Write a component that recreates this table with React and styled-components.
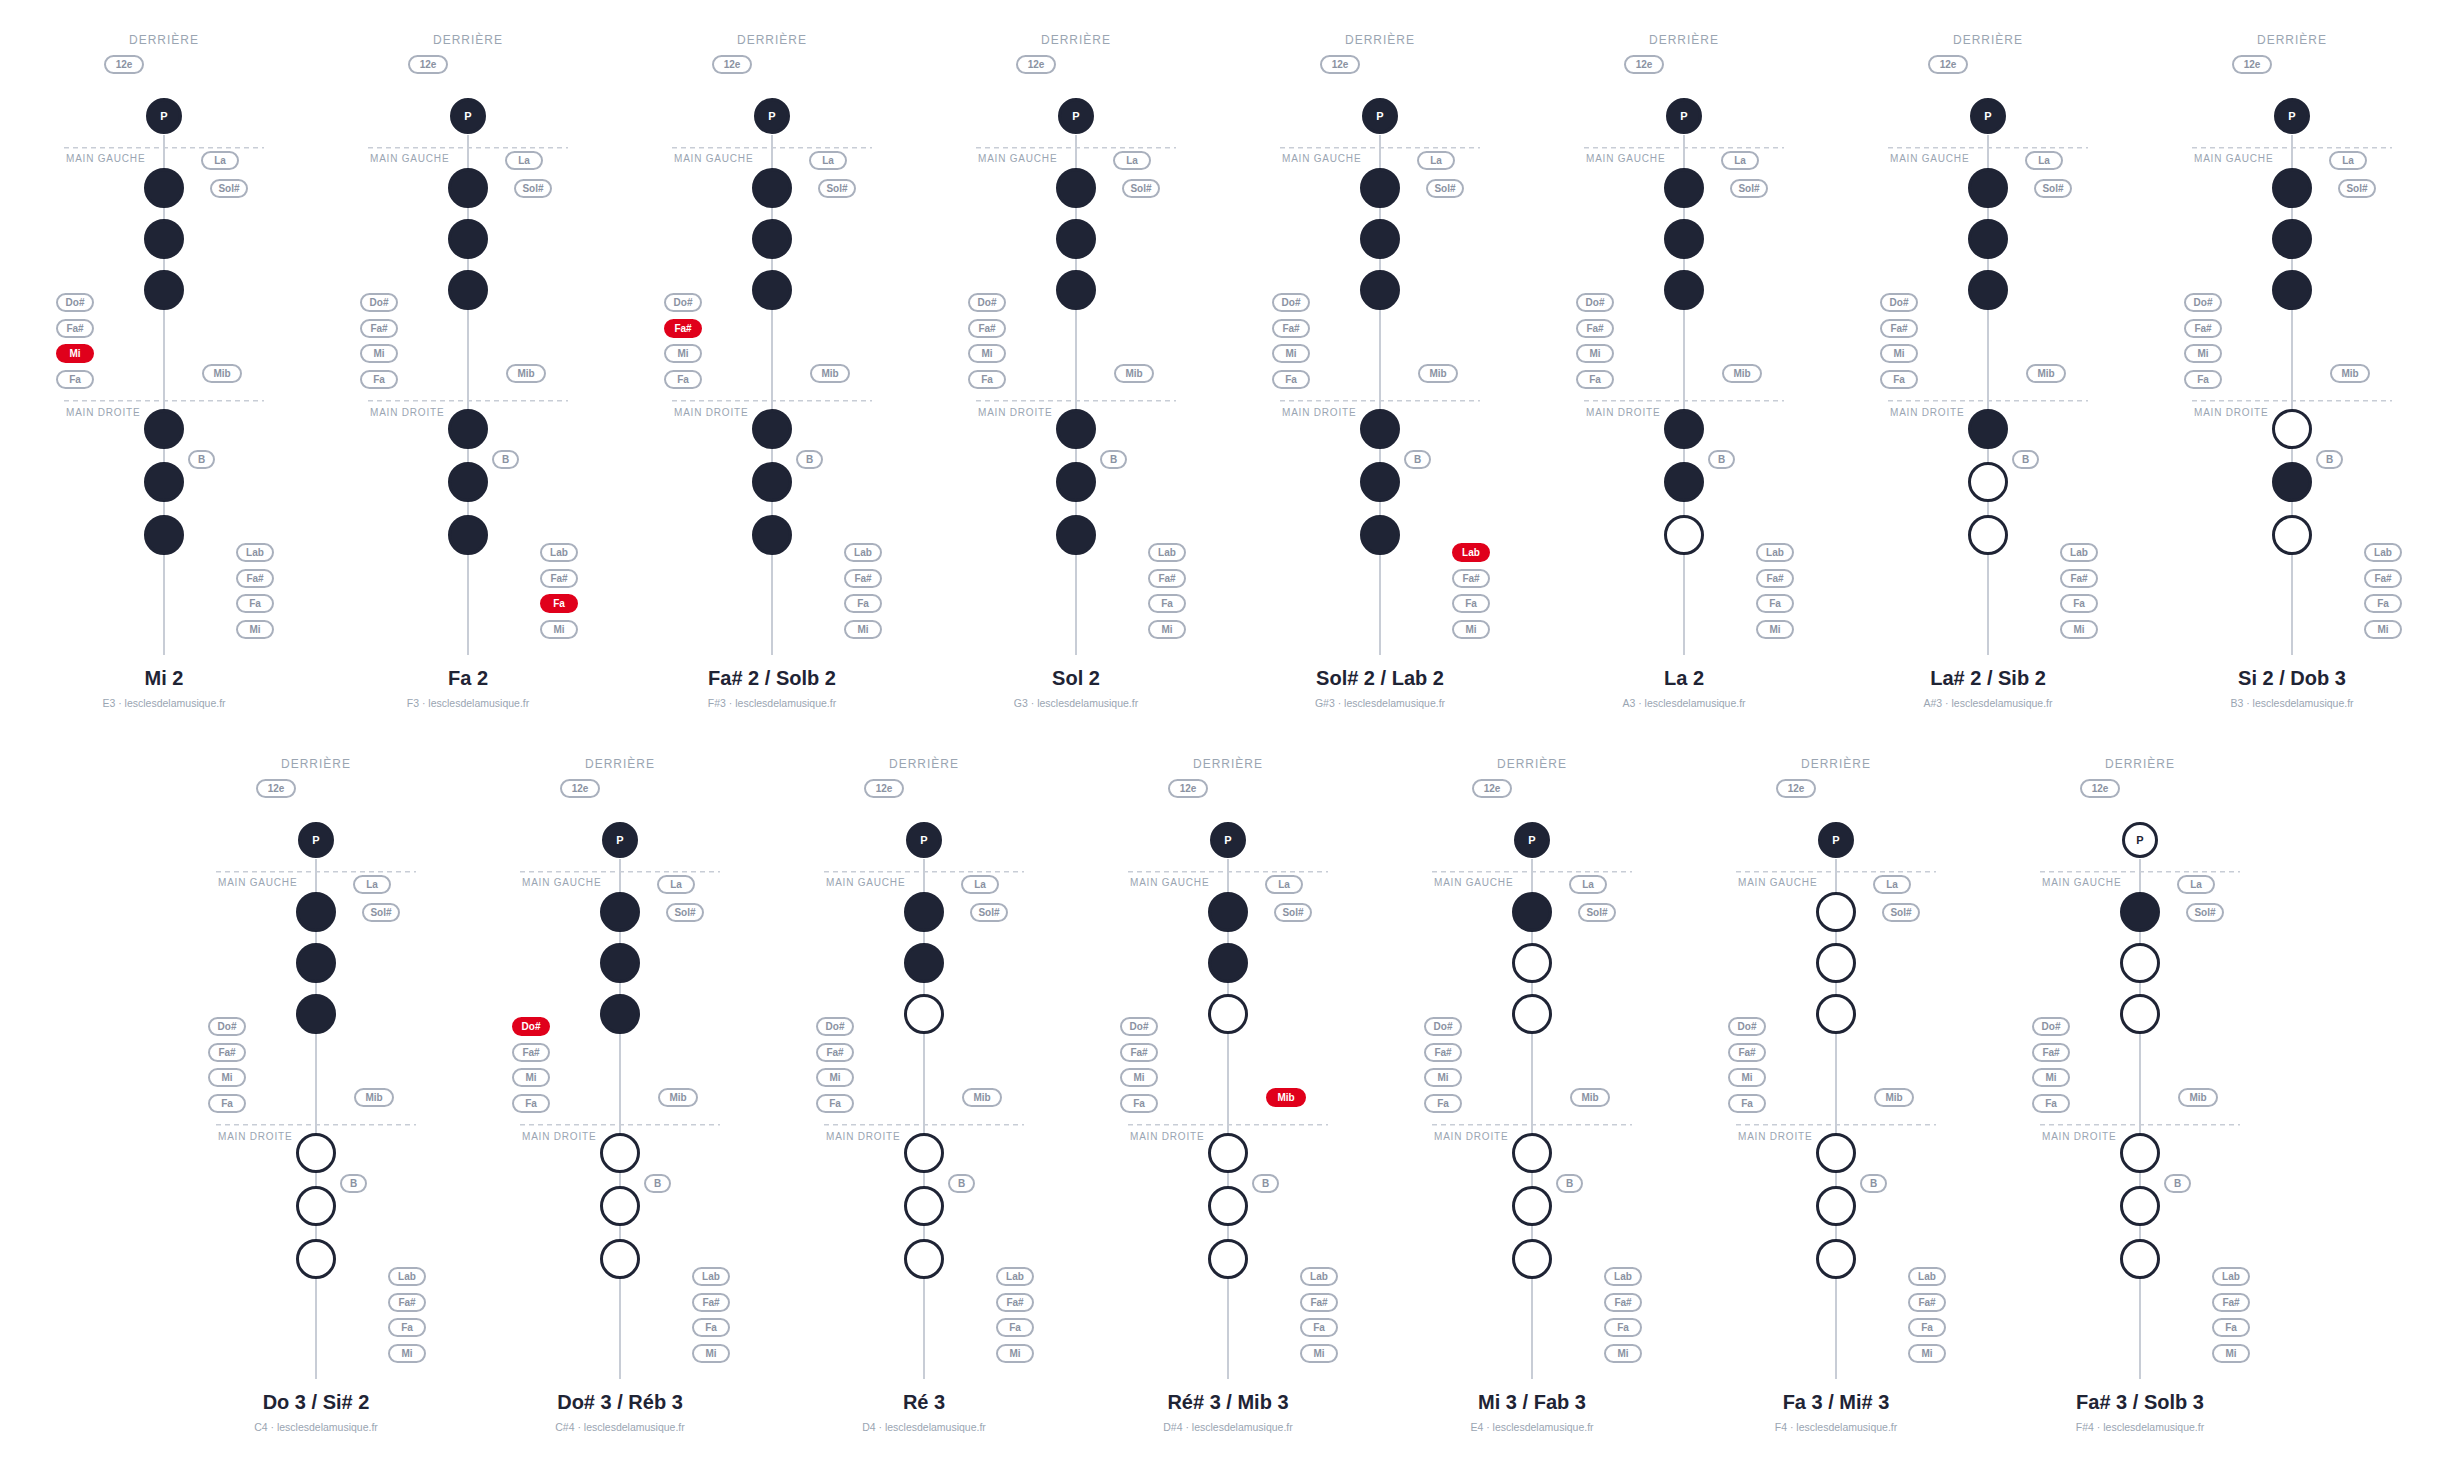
import React from "react";
import styled, { createGlobalStyle } from "styled-components";

const INK = "#1f2435";
const MUTED = "#9aa5b2";
const KEY_BORDER = "#a9b0bd";
const KEY_TEXT = "#8a92a2";
const SPINE = "#c8cdd6";
const RED = "#e0001b";

const GlobalStyle = createGlobalStyle`
  html, body {
    margin: 0;
    padding: 0;
    background: #ffffff;
  }
  body {
    font-family: "Liberation Sans", Arial, Helvetica, sans-serif;
    color: ${INK};
  }
`;

const Page = styled.div`
  display: flex;
  flex-wrap: wrap;
  justify-content: center;
  row-gap: 24px;
  padding: 26px 12px 0;
  width: 2456px;
  box-sizing: border-box;
`;

const Chart = styled.div`
  position: relative;
  width: 304px;
  height: 700px;
  display: flex;
  flex-direction: column;
  align-items: center;
`;

const Spine = styled.div`
  position: absolute;
  top: 109px;
  left: 151px;
  width: 2px;
  height: 520px;
  background: ${SPINE};
`;

const SideLabel = styled.div`
  font-size: ${(p) => (p.$small ? "10px" : "12px")};
  letter-spacing: ${(p) => (p.$small ? "0.8px" : "1px")};
  line-height: 14px;
  color: ${MUTED};
  text-transform: uppercase;
  white-space: nowrap;
`;

const BackLabel = styled(SideLabel)`
  margin-top: 7px;
  height: 14px;
`;

const ThumbKeyRow = styled.div`
  width: 120px;
  margin-top: 8px;
  display: flex;
`;

const Key = styled.div`
  box-sizing: border-box;
  width: ${(p) => p.$w || 38}px;
  height: 19px;
  border-radius: 10px;
  border: 2px solid ${(p) => (p.$active ? RED : KEY_BORDER)};
  background: ${(p) => (p.$active ? RED : "#fff")};
  color: ${(p) => (p.$active ? "#fff" : KEY_TEXT)};
  font-size: 10px;
  font-weight: 700;
  display: flex;
  align-items: center;
  justify-content: center;
  position: relative;
  z-index: 2;
`;

const Hole = styled.div`
  box-sizing: border-box;
  width: ${(p) => p.$size}px;
  height: ${(p) => p.$size}px;
  border-radius: 50%;
  border: 3px solid ${INK};
  background: ${(p) => (p.$closed ? INK : "#fff")};
  color: ${(p) => (p.$closed ? "#fff" : INK)};
  font-size: 11px;
  font-weight: 700;
  display: flex;
  align-items: center;
  justify-content: center;
  position: relative;
  z-index: 1;
  flex-shrink: 0;
`;

const ThumbHole = styled(Hole)`
  margin-top: 24px;
`;

const HandSection = styled.div`
  position: relative;
  width: 200px;
  height: ${(p) => p.$height}px;
  margin-top: ${(p) => p.$offset || 0}px;
  box-sizing: border-box;
  padding-top: ${(p) => p.$padTop}px;
  display: flex;
  flex-direction: column;
  align-items: center;
  gap: ${(p) => p.$gap}px;
  background-image: repeating-linear-gradient(
    to right,
    ${SPINE} 0 5px,
    transparent 5px 9px
  );
  background-size: 100% 1.5px;
  background-repeat: no-repeat;
  background-position: top left;
`;

const HandLabel = styled(SideLabel)`
  position: absolute;
  top: ${(p) => p.$top}px;
  left: 2px;
`;

const KeySlot = styled.div`
  position: absolute;
  top: ${(p) => p.$top}px;
  left: ${(p) => p.$left}px;
  display: flex;
  flex-direction: column;
  gap: ${(p) => p.$gap || 0}px;
`;

const Title = styled.div`
  margin-top: 12px;
  font-size: 20px;
  line-height: 24px;
  font-weight: 700;
  color: ${INK};
  white-space: nowrap;
`;

const Caption = styled.div`
  margin-top: 6px;
  font-size: 10.5px;
  line-height: 14px;
  color: ${MUTED};
  white-space: nowrap;
`;

const NOTES = [
  { name: "Mi 2", code: "E3", thumb: 1, holes: [1, 1, 1, 1, 1, 1], red: "mi" },
  { name: "Fa 2", code: "F3", thumb: 1, holes: [1, 1, 1, 1, 1, 1], red: "fa2" },
  { name: "Fa# 2 / Solb 2", code: "F#3", thumb: 1, holes: [1, 1, 1, 1, 1, 1], red: "faS" },
  { name: "Sol 2", code: "G3", thumb: 1, holes: [1, 1, 1, 1, 1, 1] },
  { name: "Sol# 2 / Lab 2", code: "G#3", thumb: 1, holes: [1, 1, 1, 1, 1, 1], red: "lab" },
  { name: "La 2", code: "A3", thumb: 1, holes: [1, 1, 1, 1, 1, 0] },
  { name: "La# 2 / Sib 2", code: "A#3", thumb: 1, holes: [1, 1, 1, 1, 0, 0] },
  { name: "Si 2 / Dob 3", code: "B3", thumb: 1, holes: [1, 1, 1, 0, 1, 0] },
  { name: "Do 3 / Si# 2", code: "C4", thumb: 1, holes: [1, 1, 1, 0, 0, 0] },
  { name: "Do# 3 / Réb 3", code: "C#4", thumb: 1, holes: [1, 1, 1, 0, 0, 0], red: "doS" },
  { name: "Ré 3", code: "D4", thumb: 1, holes: [1, 1, 0, 0, 0, 0] },
  { name: "Ré# 3 / Mib 3", code: "D#4", thumb: 1, holes: [1, 1, 0, 0, 0, 0], red: "mib" },
  { name: "Mi 3 / Fab 3", code: "E4", thumb: 1, holes: [1, 0, 0, 0, 0, 0] },
  { name: "Fa 3 / Mi# 3", code: "F4", thumb: 1, holes: [0, 0, 0, 0, 0, 0] },
  { name: "Fa# 3 / Solb 3", code: "F#4", thumb: 0, holes: [1, 0, 0, 0, 0, 0] },
];

const LEFT_SIDE = [
  { id: "doS", label: "Do#" },
  { id: "faS", label: "Fa#" },
  { id: "mi", label: "Mi" },
  { id: "fa", label: "Fa" },
];

const RIGHT_LOW = [
  { id: "lab", label: "Lab" },
  { id: "faS2", label: "Fa#" },
  { id: "fa2", label: "Fa" },
  { id: "mi2", label: "Mi" },
];

function Fingering({ note }) {
  const on = (id) => note.red === id;
  const lh = note.holes.slice(0, 3);
  const rh = note.holes.slice(3);

  return (
    <Chart>
      <Spine />
      <BackLabel>Derrière</BackLabel>
      <ThumbKeyRow>
        <Key $w={40}>12e</Key>
      </ThumbKeyRow>
      <ThumbHole $size={36} $closed={!!note.thumb}>
        P
      </ThumbHole>

      <HandSection $offset={13} $height={253} $padTop={21} $gap={11}>
        <HandLabel $small $top={5}>Main gauche</HandLabel>
        {lh.map((h, i) => (
          <Hole key={i} $size={40} $closed={!!h} />
        ))}
        <KeySlot $top={4} $left={137}>
          <Key>La</Key>
        </KeySlot>
        <KeySlot $top={32} $left={146}>
          <Key>Sol#</Key>
        </KeySlot>
        <KeySlot $top={146} $left={-8} $gap={6.5}>
          {LEFT_SIDE.map((k) => (
            <Key key={k.id} $active={on(k.id)}>
              {k.label}
            </Key>
          ))}
        </KeySlot>
        <KeySlot $top={217} $left={138}>
          <Key $w={40} $active={on("mib")}>
            Mib
          </Key>
        </KeySlot>
      </HandSection>

      <HandSection $height={254} $padTop={9} $gap={13}>
        <HandLabel $small $top={6}>Main droite</HandLabel>
        {rh.map((h, i) => (
          <Hole key={i} $size={40} $closed={!!h} />
        ))}
        <KeySlot $top={50} $left={124}>
          <Key $w={27}>B</Key>
        </KeySlot>
        <KeySlot $top={143} $left={172} $gap={6.5}>
          {RIGHT_LOW.map((k) => (
            <Key key={k.id} $active={on(k.id)}>
              {k.label}
            </Key>
          ))}
        </KeySlot>
      </HandSection>

      <Title>{note.name}</Title>
      <Caption>{note.code} · lesclesdelamusique.fr</Caption>
    </Chart>
  );
}

export default function App() {
  return (
    <>
      <GlobalStyle />
      <Page>
        {NOTES.map((n) => (
          <Fingering key={n.name} note={n} />
        ))}
      </Page>
    </>
  );
}
